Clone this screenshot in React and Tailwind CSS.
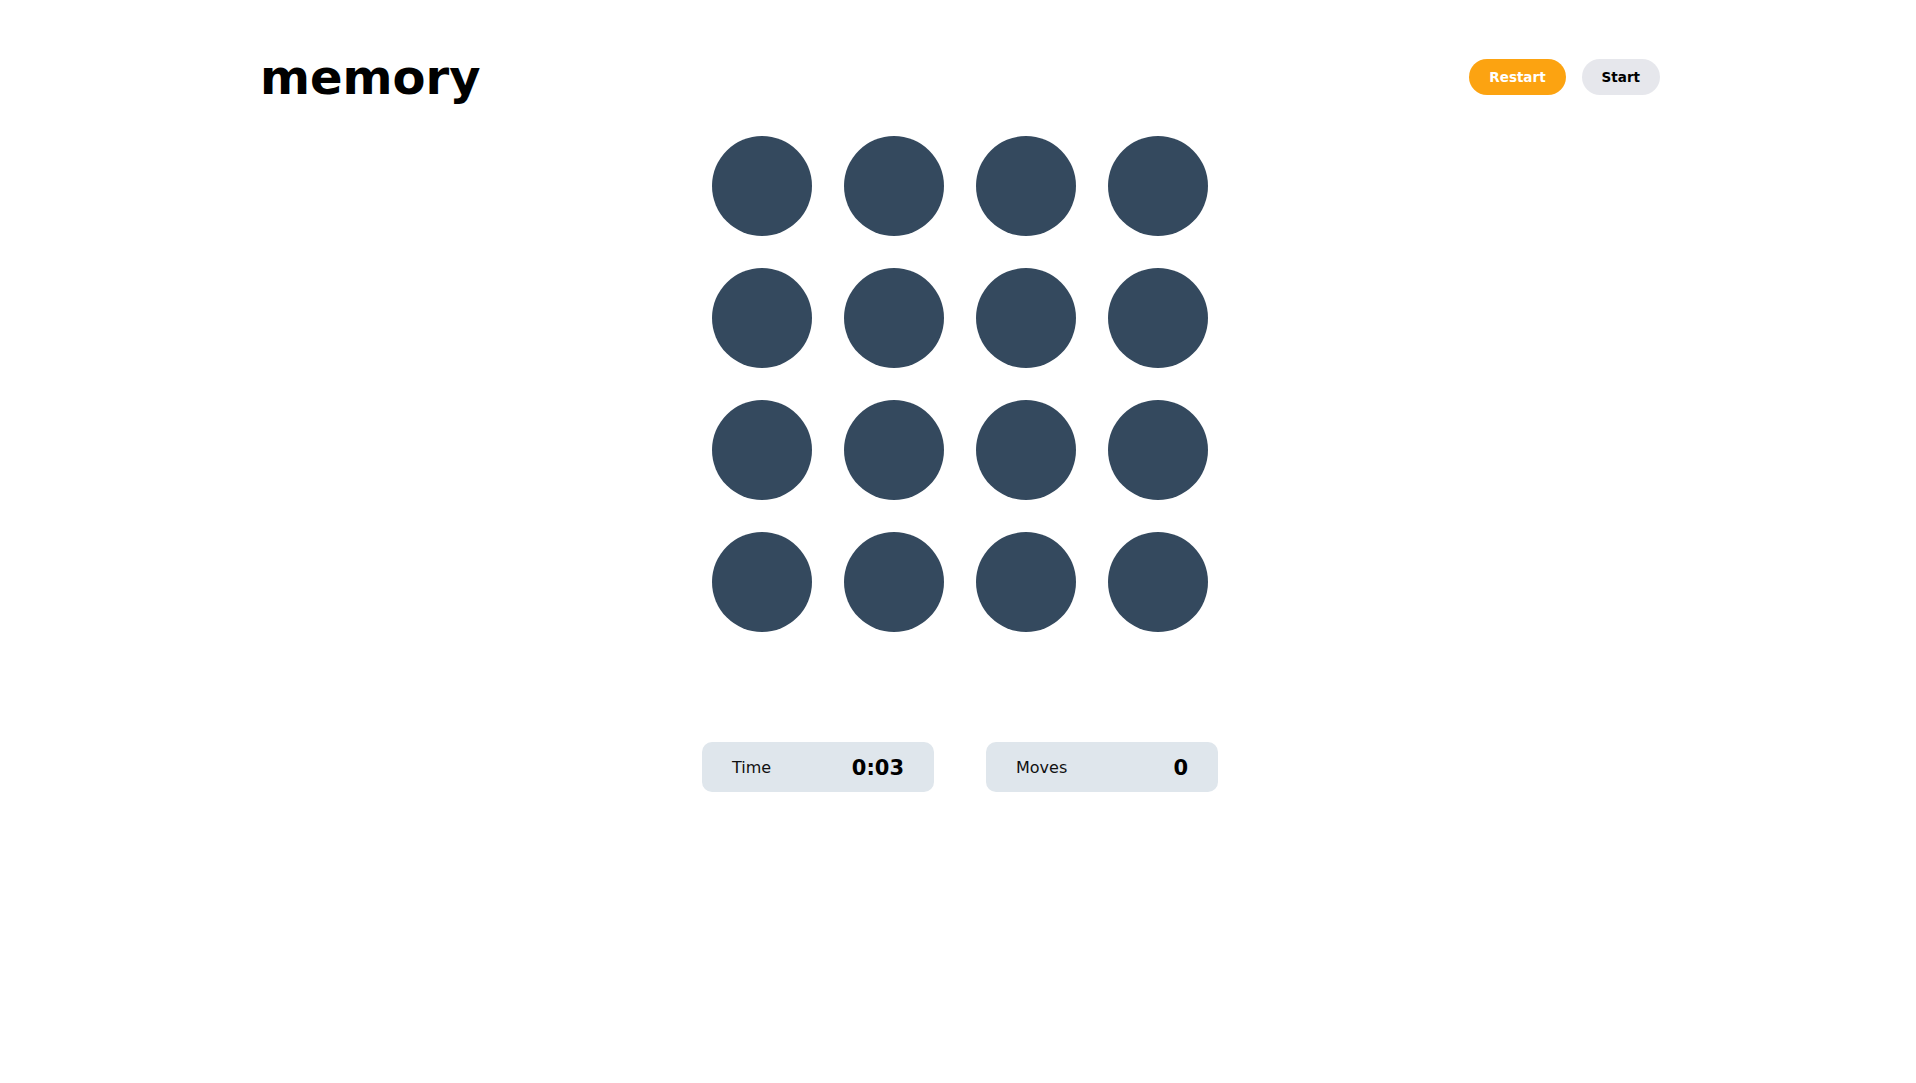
import { useState } from "react";

const tiles = Array.from({ length: 16 }, (_, i) => i);

const StatBox = ({ label, value }) => (
  <div className="w-[232px] h-[50px] px-[30px] flex items-center justify-between rounded-[10px] bg-[#dfe6ec]">
    <span className="text-[16px] leading-none pt-[2px] text-[#111]">{label}</span>
    <span className="text-[21px] leading-none pt-[2px] font-bold text-black">{value}</span>
  </div>
);

const App = () => {
  const [moves] = useState(0);

  return (
    <div
      className="min-h-screen bg-white pl-[4px]"
      style={{ fontFamily: '"DejaVu Sans", "Noto Sans", sans-serif' }}
    >
      <div className="max-w-[1400px] mx-auto pt-[53px]">
        <header className="flex items-center justify-between">
          <h1 className="text-[48px] leading-none font-bold text-black">
            memory
          </h1>
          <div className="flex items-center gap-4">
            <button className="h-9 px-5 rounded-full bg-[#fca311] text-white text-[13.5px] font-bold">
              Restart
            </button>
            <button className="h-9 px-5 rounded-full bg-[#e6e7ec] text-black text-[13.5px] font-bold">
              Start
            </button>
          </div>
        </header>

        <div className="mt-[35px] flex justify-center">
          <div className="grid grid-cols-4 gap-[32px]">
            {tiles.map((t) => (
              <button
                key={t}
                className="w-[100px] h-[100px] rounded-full bg-[#34495e]"
                aria-label={`tile ${t + 1}`}
              />
            ))}
          </div>
        </div>

        <div className="mt-[110px] flex justify-center gap-[52px]">
          <StatBox label="Time" value="0:03" />
          <StatBox label="Moves" value={moves} />
        </div>
      </div>
    </div>
  );
};

export default App;
